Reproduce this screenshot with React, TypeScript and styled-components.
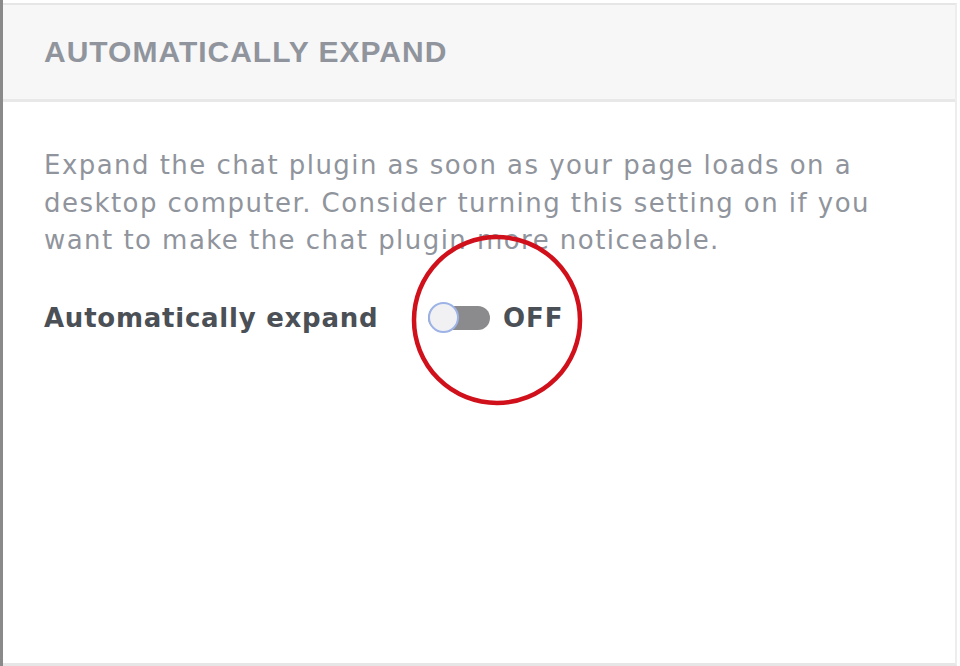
import React from "react";
import styled, { createGlobalStyle } from "styled-components";

const Global = createGlobalStyle`
  html, body { margin: 0; padding: 0; background: #ffffff; }
  #root { width: 960px; height: 666px; }
`;

const Page = styled.div`
  width: 960px;
  height: 666px;
  box-sizing: border-box;
  border-left: 3px solid #8a8a8a;
  padding: 3px 3px 0 0;
  display: flex;
  background: #ffffff;
  font-family: "Liberation Sans", Arial, sans-serif;
`;

const Panel = styled.section`
  flex: 1;
  display: flex;
  flex-direction: column;
  border-top: 2px solid #e6e6e6;
  border-right: 2px solid #ededed;
  border-bottom: 3px solid #e6e6e6;
`;

const Header = styled.header`
  height: 94px;
  flex: none;
  display: flex;
  align-items: center;
  padding-left: 41px;
  background: #f7f7f8;
  border-bottom: 3px solid #e8e8e8;
`;

const HeaderTitle = styled.h2`
  margin: 0;
  font-size: 30px;
  font-weight: 700;
  letter-spacing: 1px;
  color: #90949c;
`;

const Body = styled.div`
  padding: 45px 41px 0 41px;
  display: flex;
  flex-direction: column;
  font-family: "DejaVu Sans", "Liberation Sans", sans-serif;
`;

const Description = styled.p`
  margin: 0;
  font-size: 26px;
  line-height: 37.5px;
  letter-spacing: 1.45px;
  color: #90949c;
  max-width: 850px;
`;

const SettingRow = styled.div`
  margin-top: 40px;
  display: flex;
  align-items: center;
  height: 36px;
`;

const SettingLabel = styled.span`
  font-size: 26px;
  font-weight: 700;
  color: #4b4f56;
  letter-spacing: 0.75px;
  width: 384px;
`;

const ToggleWrap = styled.div`
  position: relative;
  display: flex;
  align-items: center;
  gap: 13px;
`;

const Track = styled.span`
  position: relative;
  display: inline-block;
  width: 62px;
  height: 24px;
  border-radius: 12px;
  background: #8b8b8d;
`;

const Knob = styled.span`
  position: absolute;
  left: 0;
  top: -4px;
  width: 27px;
  height: 27px;
  border-radius: 50%;
  background: #f1f1f4;
  border: 2.5px solid #9db3e6;
`;

const StateText = styled.span`
  font-size: 26px;
  font-weight: 700;
  color: #4b4f56;
  letter-spacing: 1px;
`;

const Annotation = styled.svg`
  position: absolute;
  left: -19px;
  top: calc(50% - 86px);
  width: 176px;
  height: 176px;
  pointer-events: none;
  overflow: visible;
`;

export default function App() {
  return (
    <>
      <Global />
      <Page>
        <Panel>
          <Header>
            <HeaderTitle>AUTOMATICALLY EXPAND</HeaderTitle>
          </Header>
          <Body>
            <Description>
              Expand the chat plugin as soon as your page loads on a desktop
              computer. Consider turning this setting on if you want to make
              the chat plugin more noticeable.
            </Description>
            <SettingRow>
              <SettingLabel>Automatically expand</SettingLabel>
              <ToggleWrap>
                <Track>
                  <Knob />
                </Track>
                <StateText>OFF</StateText>
                <Annotation viewBox="0 0 176 176">
                  <circle cx="88" cy="88" r="83" fill="none" stroke="#d0101b" strokeWidth="4.5" />
                </Annotation>
              </ToggleWrap>
            </SettingRow>
          </Body>
        </Panel>
      </Page>
    </>
  );
}
